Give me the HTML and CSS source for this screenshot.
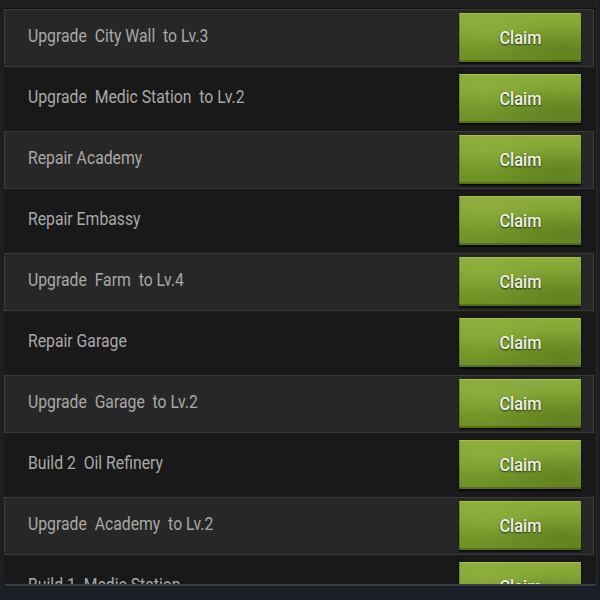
FILE: index.html
```html
<!DOCTYPE html>
<html lang="en">
<head>
  <meta charset="UTF-8">
  <meta name="viewport" content="width=device-width, initial-scale=1.0">
  <title>Quests</title>
  <link rel="stylesheet" href="styles.css">
</head>
<body>
  <div class="panel">
    <div class="panel-top"></div>
    <div class="task-list">
      <div class="task light">
        <span class="task-name">Upgrade  City Wall  to Lv.3</span>
        <button class="claim"><span>Claim</span></button>
      </div>
      <div class="task dark">
        <span class="task-name">Upgrade  Medic Station  to Lv.2</span>
        <button class="claim"><span>Claim</span></button>
      </div>
      <div class="task light">
        <span class="task-name">Repair Academy</span>
        <button class="claim"><span>Claim</span></button>
      </div>
      <div class="task dark">
        <span class="task-name">Repair Embassy</span>
        <button class="claim"><span>Claim</span></button>
      </div>
      <div class="task light">
        <span class="task-name">Upgrade  Farm  to Lv.4</span>
        <button class="claim"><span>Claim</span></button>
      </div>
      <div class="task dark">
        <span class="task-name">Repair Garage</span>
        <button class="claim"><span>Claim</span></button>
      </div>
      <div class="task light">
        <span class="task-name">Upgrade  Garage  to Lv.2</span>
        <button class="claim"><span>Claim</span></button>
      </div>
      <div class="task dark">
        <span class="task-name">Build 2  Oil Refinery</span>
        <button class="claim"><span>Claim</span></button>
      </div>
      <div class="task light">
        <span class="task-name">Upgrade  Academy  to Lv.2</span>
        <button class="claim"><span>Claim</span></button>
      </div>
      <div class="task dark">
        <span class="task-name">Build 1  Medic Station</span>
        <button class="claim"><span>Claim</span></button>
      </div>
    </div>
  </div>
</body>
</html>
```

FILE: styles.css
```css
body {
  margin: 0;
  width: 600px;
  height: 600px;
  overflow: hidden;
  background-color: #1b1e25;
  font-family: "Roboto", "Liberation Sans", sans-serif;
}
.panel {
  margin: 0 3px 0 4px;
  height: 584px;
  overflow: hidden;
  background-color: #191919;
  border-bottom: 2px solid #3a3d43;
  border-right: 1px solid #2a2a2c;
  border-radius: 0 0 4px 4px;
}
.panel-top {
  height: 8px;
  background-color: #1e1e1f;
  border-bottom: 1px solid #121212;
}
.task-list {
  margin-right: 2px;
}
.task {
  display: flex;
  justify-content: space-between;
  align-items: flex-start;
  box-sizing: border-box;
  padding-left: 23px;
  padding-right: 12px;
}
.task.light {
  height: 58px;
  padding-top: 3px;
  background-color: #272727;
  border: 1px solid #3a3a3a;
}
.task.dark {
  height: 64px;
  padding-top: 7px;
  padding-left: 24px;
  padding-right: 13px;
  background-color: #191919;
}
/* the game font is a narrow one, squeeze Roboto to match */
.task-name {
  display: inline-block;
  white-space: pre;
  color: #a9a9a9;
  font-size: 19px;
  line-height: 45px;
  transform: scaleX(0.83);
  transform-origin: left center;
}
.claim {
  width: 122px;
  height: 49px;
  padding: 0 0 2px;
  border: none;
  border-top: 1px solid #a3c04c;
  border-radius: 1px;
  background-color: #7a9e2e;
  background-image:
    radial-gradient(ellipse at 20% 30%, rgba(165, 190, 80, 0.3), transparent 45%),
    radial-gradient(ellipse at 85% 75%, rgba(60, 85, 15, 0.3), transparent 50%),
    linear-gradient(180deg, #8cad3a 0%, #7c9f2f 45%, #6c8e24 100%);
  box-shadow: 0 2px 2px rgba(0, 0, 0, 0.7), inset 0 -2px 0 rgba(40, 60, 0, 0.35), inset 1px 0 0 rgba(40, 60, 0, 0.3);
  color: #edf1e4;
  font-family: "Roboto", "Liberation Sans", sans-serif;
  font-size: 19px;
  font-weight: 500;
  text-shadow: 0 1px 2px rgba(0, 0, 0, 0.7);
}
.claim span {
  display: inline-block;
  transform: scaleX(0.86);
}
```
